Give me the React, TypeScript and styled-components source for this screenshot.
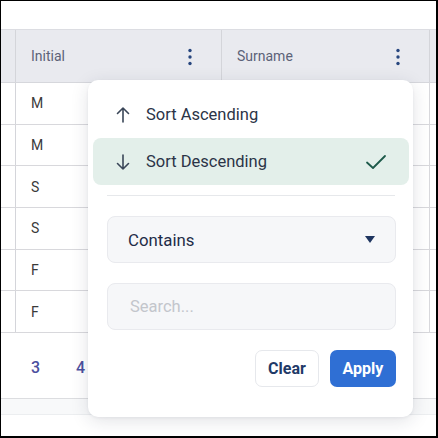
import React from 'react';
import styled, { createGlobalStyle } from 'styled-components';

const GlobalStyle = createGlobalStyle`
  html, body {
    margin: 0;
    padding: 0;
    background: #fff;
  }
  body {
    font-family: Roboto, 'Liberation Sans', sans-serif;
  }
`;

const rows = ['M', 'M', 'S', 'S', 'F', 'F'];
const pages = [3, 4, 5, 6];

function Kebab() {
  return (
    <svg width="6" height="18" viewBox="0 0 6 18">
      <circle cx="3" cy="2.5" r="1.7" fill="#27467e" />
      <circle cx="3" cy="9" r="1.7" fill="#27467e" />
      <circle cx="3" cy="15.5" r="1.7" fill="#27467e" />
    </svg>
  );
}

function ArrowUp() {
  return (
    <svg width="16" height="18" viewBox="0 0 16 18" fill="none" stroke="#3a4658" strokeWidth="1.6" strokeLinecap="round" strokeLinejoin="round">
      <path d="M8 16V2M2.5 7.5L8 2l5.5 5.5" />
    </svg>
  );
}

function ArrowDown() {
  return (
    <svg width="16" height="18" viewBox="0 0 16 18" fill="none" stroke="#3a4658" strokeWidth="1.6" strokeLinecap="round" strokeLinejoin="round">
      <path d="M8 2v14M2.5 10.5L8 16l5.5-5.5" />
    </svg>
  );
}

function Check() {
  return (
    <svg width="22" height="16" viewBox="0 0 22 16" fill="none" stroke="#1d5a4a" strokeWidth="1.8" strokeLinecap="round" strokeLinejoin="round">
      <path d="M2 8.5l6 5.5L20 2" />
    </svg>
  );
}

export default function App() {
  return (
    <>
      <GlobalStyle />
      <Frame>
        <TopSpace />
        <HeaderRow>
          <EdgeCell />
          <HeaderCell>
            <span>Initial</span>
            <Kebab />
          </HeaderCell>
          <HeaderCell>
            <span>Surname</span>
            <Kebab />
          </HeaderCell>
          <EdgeCell $last />
        </HeaderRow>
        {rows.map((r, i) => (
          <BodyRow key={i}>
            <EdgeCell />
            <Cell>{r}</Cell>
            <Cell />
            <EdgeCell $last />
          </BodyRow>
        ))}
        <Pagination>
          {pages.map((p) => (
            <PageNum key={p}>{p}</PageNum>
          ))}
        </Pagination>
        <FooterStrip />

        <Menu>
          <MenuItem>
            <IconBox>
              <ArrowUp />
            </IconBox>
            <ItemLabel>Sort Ascending</ItemLabel>
          </MenuItem>
          <MenuItem $active>
            <IconBox>
              <ArrowDown />
            </IconBox>
            <ItemLabel>Sort Descending</ItemLabel>
            <Check />
          </MenuItem>
          <Divider />
          <FilterArea>
            <Select>
              <span>Contains</span>
              <Caret />
            </Select>
            <SearchBox placeholder="Search..." />
            <Actions>
              <ClearButton>Clear</ClearButton>
              <ApplyButton>Apply</ApplyButton>
            </Actions>
          </FilterArea>
        </Menu>
      </Frame>
    </>
  );
}

const Frame = styled.div`
  position: relative;
  box-sizing: border-box;
  width: 438px;
  height: 438px;
  overflow: hidden;
  border-style: solid;
  border-color: #000;
  border-width: 1px 2px 2px 1px;
  background: #fff;
`;

const TopSpace = styled.div`
  height: 28px;
`;

const HeaderRow = styled.div`
  display: grid;
  grid-template-columns: 15px 206px 208px 6px;
  height: 54px;
  box-sizing: border-box;
  background: #e9eaef;
  border-top: 1px solid #dcdde2;
  border-bottom: 1px solid #d6d7dc;
`;

const EdgeCell = styled.div<{ $last?: boolean }>`
  border-right: ${(p) => (p.$last ? 'none' : '1px solid #d4d5da')};
`;

const HeaderCell = styled.div`
  display: flex;
  align-items: center;
  justify-content: space-between;
  padding: 0 28px 0 15px;
  border-right: 1px solid #d4d5da;
  font-size: 14px;
  color: #5c6278;

  svg {
    margin-top: 1px;
  }
`;

const BodyRow = styled.div`
  display: grid;
  grid-template-columns: 15px 206px 208px 6px;
  height: 41.7px;
  box-sizing: border-box;
  border-bottom: 1px solid #d8d8dc;
`;

const Cell = styled.div`
  display: flex;
  align-items: center;
  padding: 0 15px;
  border-right: 1px solid #d8d8dc;
  font-size: 14px;
  color: #3a3a3a;
`;

const Pagination = styled.div`
  display: flex;
  align-items: center;
  gap: 36px;
  height: 66px;
  box-sizing: border-box;
  padding: 4px 0 0 30px;
  border-bottom: 1px solid #dcdde0;
`;

const PageNum = styled.span`
  font-size: 16px;
  font-weight: 500;
  color: #4b4f9e;
  width: 9px;
`;

const FooterStrip = styled.div`
  height: 15px;
  background: #f8f9fa;
  border-bottom: 1px solid #eceef0;
`;

const Menu = styled.div`
  position: absolute;
  left: 87px;
  top: 79px;
  width: 325px;
  height: 337px;
  box-sizing: border-box;
  padding: 11px 4px 0 5px;
  background: #fff;
  border-radius: 10px;
  box-shadow: 0 4px 18px rgba(30, 40, 60, 0.13), 0 1px 3px rgba(30, 40, 60, 0.06);
  display: flex;
  flex-direction: column;
`;

const MenuItem = styled.div<{ $active?: boolean }>`
  display: flex;
  align-items: center;
  height: 47px;
  padding: 0 22px 0 22px;
  border-radius: 8px;
  background: ${(p) => (p.$active ? '#e3efea' : 'transparent')};
`;

const IconBox = styled.span`
  display: flex;
  width: 16px;
  margin-right: 15px;
`;

const ItemLabel = styled.span`
  flex: 1;
  font-size: 16.5px;
  color: #2b3447;
`;

const Divider = styled.div`
  height: 1px;
  background: #e6e8eb;
  margin: 10px 14px 0 14px;
`;

const FilterArea = styled.div`
  display: flex;
  flex-direction: column;
  padding: 20px 13px 0 14px;
`;

const Select = styled.div`
  display: flex;
  align-items: center;
  justify-content: space-between;
  height: 47px;
  box-sizing: border-box;
  padding: 0 20px 0 20px;
  background: #f6f7f9;
  border: 1px solid #e9eaee;
  border-radius: 8px;
  font-size: 16.8px;
  color: #1f2c48;
`;

const Caret = styled.span`
  width: 0;
  height: 0;
  border-left: 5px solid transparent;
  border-right: 5px solid transparent;
  border-top: 7px solid #1f3560;
`;

const SearchBox = styled.input`
  margin-top: 20px;
  height: 47px;
  box-sizing: border-box;
  padding: 0 22px;
  background: #f6f7f9;
  border: 1px solid #e9eaee;
  border-radius: 8px;
  font-family: Roboto, 'Liberation Sans', sans-serif;
  font-size: 16.5px;
  outline: none;

  &::placeholder {
    color: #c3c6cc;
  }
`;

const Actions = styled.div`
  display: flex;
  justify-content: flex-end;
  gap: 11px;
  margin-top: 20px;
`;

const BaseButton = styled.button`
  height: 37px;
  box-sizing: border-box;
  border-radius: 7px;
  font-family: Roboto, 'Liberation Sans', sans-serif;
  font-size: 16px;
  font-weight: 700;
  cursor: pointer;
`;

const ClearButton = styled(BaseButton)`
  width: 64px;
  background: #fff;
  color: #1f3a68;
  border: 1px solid #e6e8ec;
`;

const ApplyButton = styled(BaseButton)`
  width: 66px;
  background: #2f6fd4;
  color: #fff;
  border: none;
`;
